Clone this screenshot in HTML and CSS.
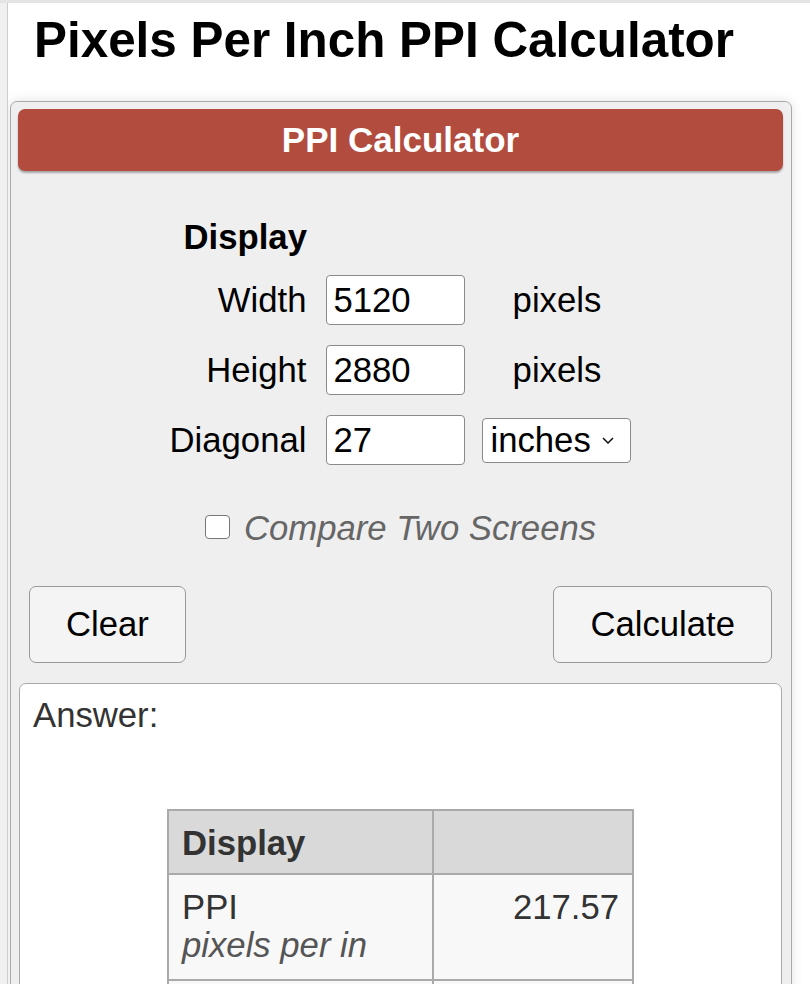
FILE: index.html
```html
<!DOCTYPE html>
<html lang="en">
<head>
<meta charset="utf-8">
<title>Pixels Per Inch PPI Calculator</title>
<link rel="stylesheet" href="styles.css">
</head>
<body>
<div class="page">
  <h1 class="title">Pixels Per Inch PPI Calculator</h1>
  <div class="panel">
    <div class="panel-head">PPI Calculator</div>
    <div class="form">
      <div class="form-title">Display</div>
      <label class="lbl" for="w">Width</label>
      <input class="num" id="w" type="text" value="5120">
      <span class="unit">pixels</span>
      <label class="lbl" for="h">Height</label>
      <input class="num" id="h" type="text" value="2880">
      <span class="unit">pixels</span>
      <label class="lbl" for="d">Diagonal</label>
      <input class="num" id="d" type="text" value="27">
      <span class="unit">
        <span class="select-wrap">
          <select class="sel"><option>inches</option><option>cm</option></select>
          <svg class="chev" width="12" height="7" viewBox="0 0 12 7"><path d="M1 1 L6 6 L11 1" fill="none" stroke="#111" stroke-width="1.5"/></svg>
        </span>
      </span>
    </div>
    <div class="compare"><span class="cb"></span><span class="cb-text">Compare Two Screens</span></div>
    <div class="actions">
      <button class="btn" type="button">Clear</button>
      <button class="btn" type="button">Calculate</button>
    </div>
    <div class="answer">
      <div class="answer-label">Answer:</div>
      <table class="result">
        <thead>
          <tr><th class="c1">Display</th><th class="c2"></th></tr>
        </thead>
        <tbody>
          <tr><td class="c1">PPI<br><span class="sub">pixels per in</span></td><td class="c2 val">217.57</td></tr>
          <tr><td class="c1">&nbsp;</td><td class="c2">&nbsp;</td></tr>
        </tbody>
      </table>
    </div>
  </div>
</div>
</body>
</html>
```

FILE: styles.css
```css
html, body {
  margin: 0;
  padding: 0;
}
body {
  background: #f0f0f0;
  border-top: 3px solid #e4e4e4;
  font-family: "Liberation Sans", Arial, Helvetica, sans-serif;
  color: #000;
  height: 981px;
  overflow: hidden;
}
.page {
  margin-left: 7px;
  border-left: 1px solid #cccccc;
  background: #fff;
  height: 981px;
  overflow: hidden;
}
.title {
  margin: 8px 0 0 0;
  padding-left: 26px;
  font-size: 49.4px;
  line-height: 57px;
  font-weight: bold;
  color: #000;
}
.panel {
  margin: 33px 18px 0 2px;
  border: 1px solid #aaaaaa;
  border-radius: 7px;
  background: #efefef;
  padding: 7px 8px 40px 7px;
  box-shadow: 0 0 12px rgba(0, 0, 0, 0.12);
  font-size: 34.7px;
}
.panel-head {
  height: 62px;
  background: #b24c3f;
  border-radius: 7px;
  color: #fff;
  font-weight: bold;
  font-size: 35px;
  display: flex;
  align-items: center;
  justify-content: center;
  box-shadow: 0 2px 2px rgba(0, 0, 0, 0.3);
}
.form {
  margin-top: 46px;
  display: grid;
  grid-template-columns: auto 139px 166px;
  grid-template-rows: 38px;
  grid-auto-rows: 50px;
  row-gap: 20px;
  justify-content: center;
  align-items: center;
}
.form-title {
  grid-column: 1 / -1;
  grid-row: 1;
  font-weight: bold;
  line-height: 40px;
  height: 40px;
  padding-left: 14px;
  margin-bottom: -2px;
  align-self: start;
}
.lbl {
  text-align: right;
  padding-right: 20px;
  line-height: 40px;
}
.num {
  box-sizing: border-box;
  width: 139px;
  height: 50px;
  border: 1px solid #8a8a8a;
  border-radius: 4px;
  background: #fff;
  padding: 0 6px;
  font-family: inherit;
  font-size: 34.7px;
  color: #000;
  margin: 0;
  outline: none;
}
.unit {
  padding-left: 17px;
  text-align: center;
  line-height: 40px;
}
.select-wrap {
  position: relative;
  display: block;
  width: 149px;
  height: 45px;
}
.sel {
  -webkit-appearance: none;
  appearance: none;
  box-sizing: border-box;
  width: 149px;
  height: 45px;
  border: 1px solid #8a8a8a;
  border-radius: 4px;
  background: #fff;
  padding: 0 0 0 7px;
  margin: 0;
  font-family: inherit;
  font-size: 34.7px;
  color: #000;
  text-align: left;
  outline: none;
}
.chev {
  position: absolute;
  right: 17px;
  top: 19px;
  pointer-events: none;
}
.compare {
  margin-top: 43px;
  display: flex;
  align-items: center;
  justify-content: center;
  height: 40px;
}
.cb {
  box-sizing: border-box;
  width: 25px;
  height: 24px;
  border: 1.5px solid #777;
  border-radius: 4px;
  background: #fff;
  margin-right: 14px;
  margin-top: -2px;
}
.cb-text {
  font-style: italic;
  color: #666;
  line-height: 40px;
}
.actions {
  margin-top: 38px;
  padding: 0 11px 0 11px;
  display: flex;
  justify-content: space-between;
}
.btn {
  height: 77px;
  padding: 0 36px;
  border: 1.5px solid #999;
  border-radius: 7px;
  background: #f4f4f4;
  font-family: inherit;
  font-size: 34.7px;
  color: #000;
  margin: 0;
}
.answer {
  margin: 20px 1px 0 1px;
  border: 1px solid #aaaaaa;
  border-radius: 7px;
  background: #fff;
  padding: 11px 13px 40px 13px;
}
.answer-label {
  color: #333;
  line-height: 40px;
}
.result {
  margin: 74px auto 0 auto;
  border-collapse: separate;
  border-spacing: 0;
  border-top: 2px solid #aaaaaa;
  border-left: 2px solid #aaaaaa;
  width: 467px;
  color: #333;
  font-size: 34.7px;
  line-height: 38px;
}
.result th,
.result td {
  border-right: 2px solid #aaaaaa;
  border-bottom: 2px solid #aaaaaa;
  padding: 13px 13px 11px 13px;
  text-align: left;
  vertical-align: top;
}
.result th {
  background: #d9d9d9;
  font-weight: bold;
}
.result td {
  background: #f8f8f8;
  padding-bottom: 15px;
}
.result .c1 { width: 237px; }
.result .c2 { width: 172px; }
.result .val { text-align: right; }
.sub {
  font-style: italic;
  color: #555;
}
```
